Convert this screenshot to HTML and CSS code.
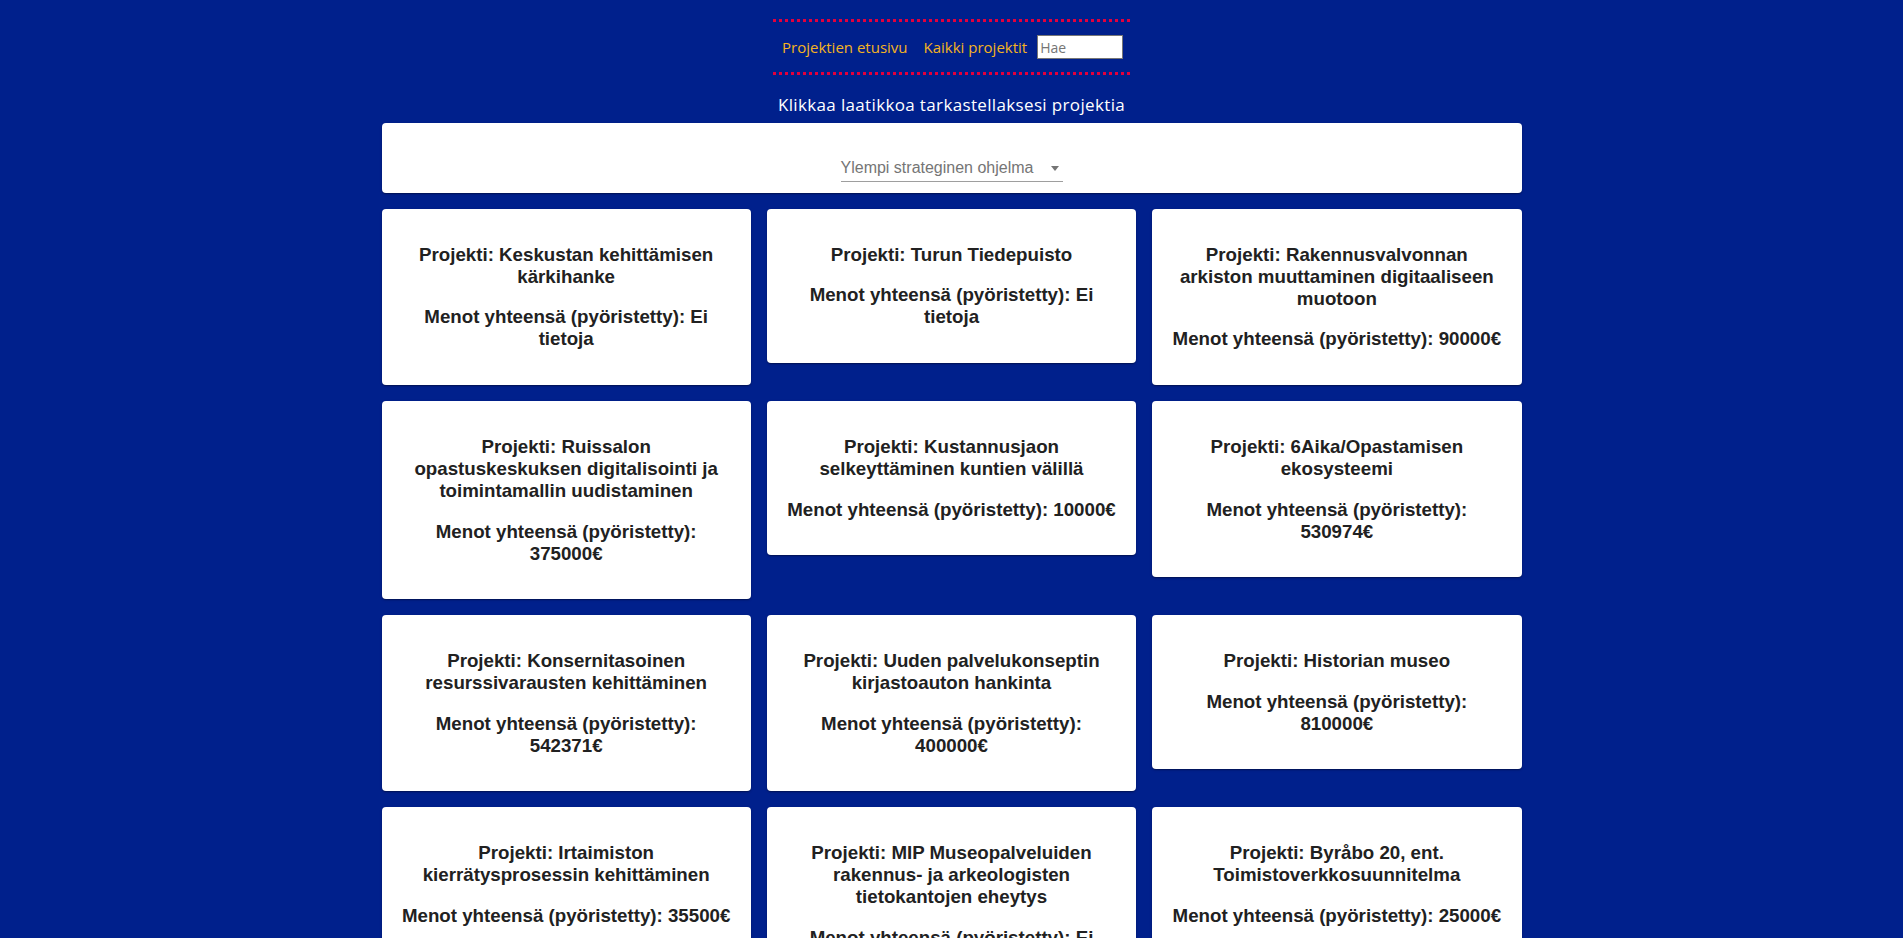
FILE: index.html
```html
<!DOCTYPE html>
<html lang="fi">
<head>
<meta charset="utf-8">
<title>Projektit</title>
<link rel="stylesheet" href="styles.css">
</head>
<body>
<header class="header">
  <nav class="nav">
    <a class="nav-link" href="#">Projektien etusivu</a>
    <a class="nav-link" href="#">Kaikki projektit</a>
    <input class="search" type="text" placeholder="Hae">
  </nav>
  <h1 class="intro">Klikkaa laatikkoa tarkastellaksesi projektia</h1>
</header>
<main class="container">
  <section class="paper filter">
    <div class="select">
      <span class="select-value">Ylempi strateginen ohjelma</span>
      <span class="select-arrow"></span>
    </div>
  </section>
  <section class="grid">
    <article class="paper card"><p class="line">Projekti: Keskustan kehittämisen kärkihanke</p><p class="line">Menot yhteensä (pyöristetty): Ei tietoja</p></article>
    <article class="paper card"><p class="line">Projekti: Turun Tiedepuisto</p><p class="line">Menot yhteensä (pyöristetty): Ei tietoja</p></article>
    <article class="paper card"><p class="line">Projekti: Rakennusvalvonnan arkiston muuttaminen digitaaliseen muotoon</p><p class="line">Menot yhteensä (pyöristetty): 90000€</p></article>
    <article class="paper card"><p class="line">Projekti: Ruissalon opastuskeskuksen digitalisointi ja toimintamallin uudistaminen</p><p class="line">Menot yhteensä (pyöristetty): 375000€</p></article>
    <article class="paper card"><p class="line">Projekti: Kustannusjaon selkeyttäminen kuntien välillä</p><p class="line">Menot yhteensä (pyöristetty): 10000€</p></article>
    <article class="paper card"><p class="line">Projekti: 6Aika/Opastamisen ekosysteemi</p><p class="line">Menot yhteensä (pyöristetty): 530974€</p></article>
    <article class="paper card"><p class="line">Projekti: Konsernitasoinen resurssivarausten kehittäminen</p><p class="line">Menot yhteensä (pyöristetty): 542371€</p></article>
    <article class="paper card"><p class="line">Projekti: Uuden palvelukonseptin kirjastoauton hankinta</p><p class="line">Menot yhteensä (pyöristetty): 400000€</p></article>
    <article class="paper card"><p class="line">Projekti: Historian museo</p><p class="line">Menot yhteensä (pyöristetty): 810000€</p></article>
    <article class="paper card"><p class="line">Projekti: Irtaimiston kierrätysprosessin kehittäminen</p><p class="line">Menot yhteensä (pyöristetty): 35500€</p></article>
    <article class="paper card"><p class="line">Projekti: MIP Museopalveluiden rakennus- ja arkeologisten tietokantojen eheytys</p><p class="line">Menot yhteensä (pyöristetty): Ei tietoja</p></article>
    <article class="paper card"><p class="line">Projekti: Byråbo 20, ent. Toimistoverkkosuunnitelma</p><p class="line">Menot yhteensä (pyöristetty): 25000€</p></article>
  </section>
</main>
</body>
</html>
```
FILE: styles.css
```css
html, body {
  margin: 0;
  padding: 0;
}

body {
  background: #00208c;
  font-family: "Liberation Sans", Arial, sans-serif;
  padding-bottom: 40px;
}

.header {
  padding-top: 19px;
  display: flex;
  flex-direction: column;
  align-items: center;
}

.nav {
  width: 357px;
  height: 56px;
  box-sizing: border-box;
  border-top: 3px dotted #e3003c;
  border-bottom: 3px dotted #e3003c;
  display: flex;
  align-items: center;
  padding: 0 0 0 9px;
  white-space: nowrap;
}

.nav-link {
  flex-shrink: 0;
  font-family: "Open Sans", "Noto Sans", sans-serif;
  font-size: 15px;
  color: #f4b321;
  text-decoration: none;
  margin-right: 16px;
  line-height: 20px;
}

.nav-link + .nav-link {
  margin-right: 10px;
}

.search {
  flex-shrink: 0;
  width: 86px;
  height: 24px;
  box-sizing: border-box;
  border: 1px solid #767676;
  padding: 0 2px;
  font-family: "Open Sans", "Noto Sans", sans-serif;
  font-size: 14px;
  background: #fff;
  margin: 0;
}

.search::placeholder {
  color: #757575;
}

.intro {
  margin: 0;
  padding: 20px 0 8px;
  font-family: "Open Sans", "Noto Sans", sans-serif;
  font-weight: normal;
  font-size: 17px;
  line-height: 20px;
  color: #ffffff;
  letter-spacing: 0.35px;
}

.container {
  width: 1140px;
  margin: 0 auto;
}

.paper {
  background: #fff;
  border-radius: 4px;
  box-shadow: 0 1px 3px rgba(0, 0, 0, 0.2), 0 1px 1px rgba(0, 0, 0, 0.14), 0 2px 1px -1px rgba(0, 0, 0, 0.12);
}

.filter {
  height: 70px;
  box-sizing: border-box;
  padding-top: 35px;
  display: flex;
  justify-content: center;
}

.select {
  width: 222px;
  height: 24px;
  box-sizing: border-box;
  border-bottom: 1px solid #9e9e9e;
  display: flex;
  align-items: flex-start;
  justify-content: space-between;
}

.select-value {
  font-size: 16px;
  line-height: 19px;
  color: #757575;
}

.select-arrow {
  width: 0;
  height: 0;
  border-left: 4.5px solid transparent;
  border-right: 4.5px solid transparent;
  border-top: 5px solid #757575;
  margin: 8px 4px 0 0;
}

.grid {
  margin-top: 16px;
  display: grid;
  grid-template-columns: repeat(3, 1fr);
  gap: 16px;
  align-items: start;
}

.card {
  padding: 34.72px 20px;
  text-align: center;
  color: #212121;
}

.line {
  margin: 0;
  font-size: 18.72px;
  font-weight: bold;
  line-height: 22px;
}

.line + .line {
  margin-top: 18.72px;
}
```
